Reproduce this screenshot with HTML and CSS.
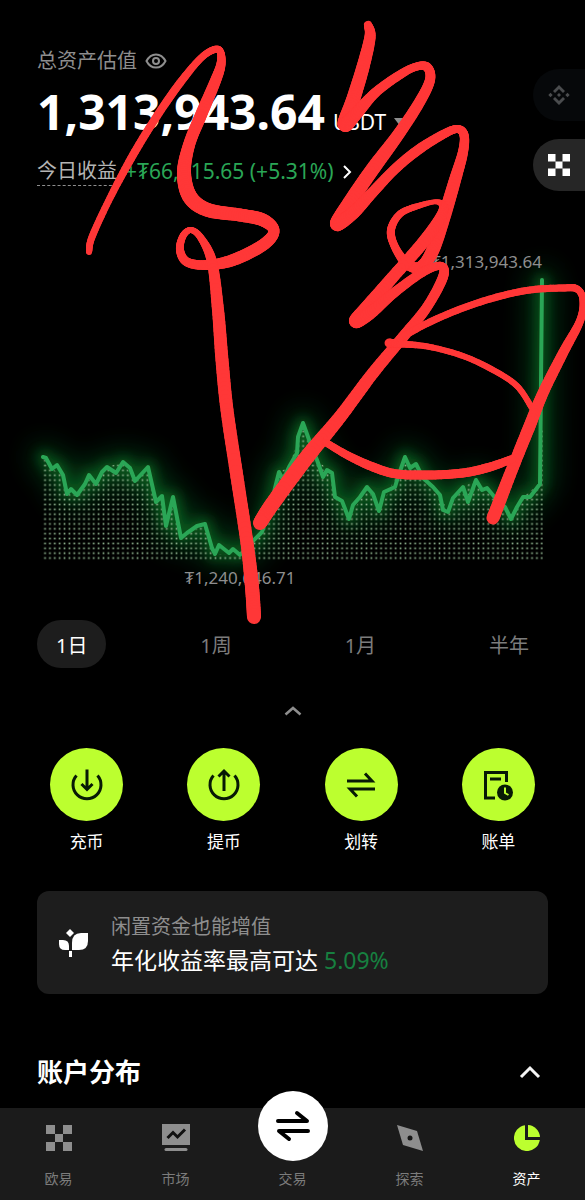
FILE: index.html
```html
<!DOCTYPE html>
<html lang="zh-CN">
<head>
<meta charset="utf-8">
<meta name="viewport" content="width=device-width, initial-scale=1">
<title>资产</title>
<link rel="stylesheet" href="styles.css">
</head>
<body>
<div class="page">
  <main class="content">
    <header class="summary">
      <div class="summary-label">
        <h1 class="label-text">总资产估值</h1>
        <button class="plain" aria-label="隐藏金额">
          <svg width="22" height="18" viewBox="0 0 22 18" fill="none" stroke="#8e8e8e" stroke-width="2"><path d="M1.500 9C6 .2 16 .2 20.500 9C16 17.800 6 17.800 1.500 9Z"/><circle cx="11" cy="9" r="3"/></svg>
        </button>
      </div>
      <div class="balance">
        <span class="amount">1,313,943.64</span>
        <button class="plain currency">USDT
          <svg width="12" height="8" viewBox="0 0 12 8"><path d="M0 0H12L6 8Z" fill="#8e8e8e"/></svg>
        </button>
      </div>
      <a class="profit" href="#profit">
        <span class="profit-label">今日收益</span>
        <span class="profit-value">+₮66,215.65 (+5.31%)</span>
        <svg width="10" height="14" viewBox="0 0 10 14" fill="none" stroke="#fff" stroke-width="2"><path d="M2 1L8 7L2 13"/></svg>
      </a>
    </header>

    <svg class="chart" viewBox="0 240 585 360" role="img" aria-label="资产走势">
      <defs>
        <pattern id="dots" x="42.600" y="555.600" width="4.870" height="4.870" patternUnits="userSpaceOnUse"><rect x="1.600" y="1.600" width="1.700" height="1.700" fill="#8fb48f"/></pattern>
        <filter id="glow" x="0" y="200" width="585" height="420" filterUnits="userSpaceOnUse"><feGaussianBlur stdDeviation="6"/></filter>
        <filter id="haze" x="0" y="200" width="585" height="420" filterUnits="userSpaceOnUse"><feGaussianBlur stdDeviation="14"/></filter>
        <path id="trend" d="M43 457L46 458L52 469L57 465L63 475L67 494L71 489L77 495L85 484L89 475L96 484L102 472L107 467L116 473L123 462L130 468L135 481L148 467L156 502L162 496L166 526L173 497L181 538L187 533L197 526L205 524L212 548L215 554L219 545L229 553L233 549L240 555L252 542L262 532L272 500L279 472L283 480L289 467L297 453L298 437L303 423L312 448L317 460L323 477L327 470L332 473L335 497L342 501L349 519L353 505L360 497L367 487L373 494L379 511L384 492L395 487L398 477L405 457L410 468L416 464L423 478L433 487L440 495L443 510L448 512L453 498L463 487L468 502L476 480L482 490L487 488L497 500L505 507L511 519L517 507L523 497L530 497L540 484L542 280"/>
        <clipPath id="under"><path d="M43 457L52 469L63 475L67 494L77 495L89 475L96 484L107 467L123 462L135 481L148 467L156 502L162 496L166 526L173 497L181 538L205 524L215 554L240 556L262 532L279 472L289 467L303 423L317 460L332 473L335 497L349 519L367 487L379 511L405 457L423 478L440 495L448 512L463 487L476 480L497 500L511 519L523 497L539 484L541 430L543 430V560H43Z"/></clipPath>
      </defs>
      <g fill="none" stroke-linejoin="round" stroke-linecap="round">
        <use href="#trend" stroke="#087a2e" stroke-width="24" opacity=".45" filter="url(#haze)"/>
        <use href="#trend" stroke="#07882c" stroke-width="11" opacity=".5" filter="url(#glow)"/>
        <rect x="42" y="420" width="502" height="140" fill="url(#dots)" clip-path="url(#under)"/>
        <use href="#trend" stroke="#2aa656" stroke-width="4"/>
      </g>
      <text class="chart-label" x="542" y="268" text-anchor="end">₮1,313,943.64</text>
      <text class="chart-label" x="240" y="584" text-anchor="middle">₮1,240,646.71</text>
    </svg>

    <div class="ranges">
      <button class="range range-active">1日</button>
      <button class="range">1周</button>
      <button class="range">1月</button>
      <button class="range">半年</button>
    </div>

    <button class="plain collapse" aria-label="收起图表">
      <svg width="18" height="10" viewBox="0 0 18 10" fill="none" stroke="#8e8e8e" stroke-width="2.500"><path d="M1.500 8.500L9 2L16.500 8.500"/></svg>
    </button>

    <div class="actions">
      <button class="plain action">
        <span class="disc"><svg width="36" height="36" viewBox="0 0 36 36" fill="none" stroke="#071a05" stroke-width="3"><path d="M7.500 8.500A14 14 0 1 0 28.500 8.500M18 2.500V22M12.500 17L18 22.500L23.500 17"/></svg></span>
        <span>充币</span>
      </button>
      <button class="plain action">
        <span class="disc"><svg width="36" height="36" viewBox="0 0 36 36" fill="none" stroke="#071a05" stroke-width="3"><path d="M7.500 8.500A14 14 0 1 0 28.500 8.500M18 24V5M12.500 9.500L18 4L23.500 9.500"/></svg></span>
        <span>提币</span>
      </button>
      <button class="plain action">
        <span class="disc"><svg width="36" height="36" viewBox="0 0 36 36" fill="none" stroke="#071a05" stroke-width="3"><path d="M4 14H29L22 6.500M32 22H7L14 29.500"/></svg></span>
        <span>划转</span>
      </button>
      <button class="plain action">
        <span class="disc"><svg width="36" height="36" viewBox="0 0 36 36" fill="none" stroke="#071a05" stroke-width="3"><path d="M15 31H5.500V5.500H26.500V15M10 12H21"/><circle cx="25" cy="25.500" r="8" fill="#071a05" stroke="none"/><path d="M25 20.500V26L28.500 28" stroke="#bcff2f" stroke-width="2"/></svg></span>
        <span>账单</span>
      </button>
    </div>

    <a class="earn" href="#earn">
      <svg class="earn-icon" width="30" height="30" viewBox="0 0 30 30" fill="#fff"><path d="M11 1L15 5L11 9L7 5Z"/><path d="M0 12H4Q10 12 10 18V22H6Q0 22 0 16Z"/><path d="M29 5V13Q29 22 20 22H13V15Q13 5 22 5Z"/><path d="M10 23H13V29H10Z"/></svg>
      <span class="earn-copy">
        <span class="earn-note">闲置资金也能增值</span>
        <span class="earn-rate">年化收益率最高可达 <span class="rate">5.09%</span></span>
      </span>
    </a>

    <section class="accounts">
      <h2 class="accounts-title">账户分布</h2>
      <button class="plain" aria-label="收起账户分布">
        <svg width="22" height="14" viewBox="0 0 22 14" fill="none" stroke="#f4f4f4" stroke-width="3"><path d="M2 12L11 3L20 12"/></svg>
      </button>
    </section>
  </main>

  <nav class="nav">
    <a class="nav-item" href="#home">
      <span class="nav-icon"><svg width="26" height="26" viewBox="0 0 26 26" fill="#8e8e8e"><path d="M0 0H9V9H0ZM17 0H26V9H17ZM9 9H17V17H9ZM0 17H9V26H0ZM17 17H26V26H17Z"/></svg></span>
      <span>欧易</span>
    </a>
    <a class="nav-item" href="#market">
      <span class="nav-icon"><svg width="28" height="28" viewBox="0 0 28 28"><path d="M0 0H28V21H0Z" fill="#8e8e8e"/><path d="M4 25.500H24" stroke="#8e8e8e" stroke-width="3" stroke-linecap="round"/><path d="M5.500 14L11 8.500L15.500 13L23 5.500" fill="none" stroke="#111" stroke-width="3"/></svg></span>
      <span>市场</span>
    </a>
    <a class="nav-item" href="#trade">
      <span class="nav-icon"><span class="trade"><svg width="38" height="34" viewBox="0 0 38 34" fill="none" stroke="#000" stroke-width="4" stroke-linecap="round" stroke-linejoin="round"><path d="M4 12H33L23 4M34 22H5L15 30"/></svg></span></span>
      <span>交易</span>
    </a>
    <a class="nav-item" href="#explore">
      <span class="nav-icon"><svg width="26" height="26" viewBox="0 0 26 26"><path d="M0 0L20 6L26 26L6 20Z" fill="#8e8e8e"/><circle cx="13" cy="13" r="2.500" fill="#161616"/></svg></span>
      <span>探索</span>
    </a>
    <a class="nav-item nav-active" href="#assets" aria-current="page">
      <span class="nav-icon"><svg width="26" height="26" viewBox="0 0 26 26" fill="#bcff2f"><path d="M11 .2A13 13 0 1 0 25.800 15H11Z"/><path d="M14 0A13 13 0 0 1 26 12H14Z"/></svg></span>
      <span>资产</span>
    </a>
  </nav>

  <div class="switcher">
    <button class="plain venue venue-dim" aria-label="Binance">
      <svg width="22" height="22" viewBox="0 0 22 22" fill="#4a4c4e"><path d="M11 1L17 7L15 9L11 5L7 9L5 7ZM11 21L17 15L15 13L11 17L7 13L5 15ZM11 9L13 11L11 13L9 11ZM2.500 8.800L4.700 11L2.500 13.200L.3 11ZM19.500 8.800L21.700 11L19.500 13.200L17.300 11Z"/></svg>
    </button>
    <button class="plain venue" aria-label="OKX">
      <svg width="22" height="22" viewBox="0 0 22 22" fill="#fff"><path d="M0 0H7.500V7.500H0ZM14.500 0H22V7.500H14.500ZM7.500 7.500H14.500V14.500H7.500ZM0 14.500H7.500V22H0ZM14.500 14.500H22V22H14.500Z"/></svg>
    </button>
  </div>

  <svg class="ink" id="ink" viewBox="0 0 585 640" aria-hidden="true"></svg>
</div>
<script src="ink.js"></script>
</body>
</html>
```
FILE: styles.css
```css
* { box-sizing: border-box; }

body {
  margin: 0;
  background: #000;
  color: #fff;
  font-family: "Noto Sans", "Noto Sans CJK SC", sans-serif;
}

a { color: inherit; text-decoration: none; }
svg { display: block; flex: none; }

button { font: inherit; cursor: pointer; }

.plain {
  padding: 0;
  border: 0;
  background: none;
  color: inherit;
}

.page {
  position: relative;
  display: flex;
  flex-direction: column;
  min-height: 100vh;
  overflow: hidden;
}

.content { padding-bottom: 18px; }

.summary {
  display: flex;
  flex-direction: column;
  align-items: flex-start;
  padding: 46px 37px 0;
  margin-bottom: 54px;
}

.summary-label {
  display: flex;
  align-items: center;
  gap: 8px;
  line-height: 30px;
}

.label-text {
  margin: 0;
  font-size: 20px;
  font-weight: 400;
  color: #8e8e8e;
}

.balance {
  display: flex;
  align-items: baseline;
  gap: 8px;
  margin: 6px 0 15px;
  line-height: 60px;
}

.amount { font-size: 48px; font-weight: 700; }

.currency {
  display: flex;
  align-items: center;
  gap: 8px;
  font-size: 21px;
  line-height: 30px;
}

.profit {
  display: flex;
  align-items: flex-start;
  gap: 8px;
  font-size: 20px;
  line-height: 28px;
}

.profit svg { align-self: center; }

.profit-label {
  color: #b4b4b4;
  border-bottom: 1px dashed #8e8e8e;
}

.profit-value { color: #2aa656; font-size: 21px; }

.chart { width: 100%; }

.chart-label {
  font-size: 17px;
  fill: #8e8e8e;
}

.ranges {
  display: flex;
  justify-content: space-between;
  padding: 0 37px;
  margin-top: 20px;
}

.range {
  padding: 4px 19px 0;
  border: 0;
  border-radius: 24px;
  background: none;
  color: #7c7c7c;
  font-size: 20px;
  line-height: 44px;
}

.range-active { background: #1d1d1d; color: #fff; }

.collapse {
  display: block;
  padding: 9px;
  margin: 29px auto 23px;
}

.actions {
  display: grid;
  grid-template-columns: repeat(4, 1fr);
  padding: 0 18px;
}

.action {
  display: flex;
  flex-direction: column;
  align-items: center;
  gap: 9px;
  font-size: 17px;
  line-height: 24px;
}

.disc {
  display: grid;
  place-items: center;
  width: 73px;
  height: 73px;
  border-radius: 50%;
  background: #bcff2f;
}

.earn {
  display: flex;
  align-items: center;
  gap: 22px;
  margin: 37px 37px 60px;
  padding: 16px 22px;
  border-radius: 12px;
  background: #1d1d1d;
}

.earn-copy {
  display: flex;
  flex-direction: column;
  padding-top: 5px;
}

.earn-note { color: #8e8e8e; font-size: 20px; line-height: 30px; }
.earn-rate { font-size: 23px; line-height: 36px; }
.rate { color: #178040; }

.accounts {
  display: flex;
  align-items: center;
  justify-content: space-between;
  padding: 0 44px 0 37px;
}

.accounts-title {
  margin: 0;
  font-size: 26px;
  font-weight: 600;
  line-height: 36px;
}

.nav {
  display: grid;
  grid-template-columns: repeat(5, 1fr);
  margin-top: auto;
  padding: 14px 0 11px;
  background: #1b1b1b;
}

.nav-item {
  display: flex;
  flex-direction: column;
  align-items: center;
  gap: 15px;
  color: #7c7c7c;
  font-size: 14px;
  line-height: 20px;
}

.nav-active { color: #fff; }

.nav-icon {
  position: relative;
  display: grid;
  place-items: center;
  width: 70px;
  height: 32px;
}

.trade {
  position: absolute;
  bottom: 0;
  left: 0;
  display: grid;
  place-items: center;
  width: 70px;
  height: 70px;
  margin-bottom: -7px;
  border-radius: 50%;
  background: #fff;
}

.switcher {
  position: absolute;
  top: 69px;
  right: 0;
  display: flex;
  flex-direction: column;
  gap: 18px;
}

.venue {
  display: grid;
  align-items: center;
  width: 52px;
  height: 52px;
  padding-left: 15px;
  border-radius: 26px 0 0 26px;
  background: #262626;
}

.venue-dim { background: #06080a; }

.ink {
  position: absolute;
  top: 0;
  left: 0;
  width: 100%;
  pointer-events: none;
}
```
FILE: ink.js
```js
// Freehand strokes as [x, y, pen width], smoothed and drawn in short segments.
const strokes = [
  [[89,252,5],[92,237,6],[110,198,6],[133,155,7],[157,116,7],[180,83,7],[200,59,6],[213,50,6],[220,51,6],[221,64,8],[215,82,10],[201,115,11],[189,145,11],[184,173,13],[190,197,14],[208,210,13],[240,215,12],[263,220,12],[274,231,10],[263,245,11],[233,260,11],[207,265,9],[187,262,8],[180,250,7],[183,236,6],[191,230,5],[201,238,6],[212,262,9],[218,310,11],[222,360,12],[227,410,12],[237,477,12],[247,543,12],[252,587,13],[254,617,13]],
  [[368,25,7],[370,37,10],[363,67,12],[353,100,13],[345,124,14],[355,115,12],[375,93,9],[398,76,8],[415,67,7],[427,67,8],[430,80,9],[419,103,10],[398,135,11],[372,170,13],[348,205,13],[337,224,13],[353,213,12],[372,193,10],[395,169,9],[418,150,9],[442,135,8],[457,129,7],[464,135,8],[463,152,9],[455,180,11],[444,217,12],[432,252,12],[420,267,10],[407,264,9],[395,247,7],[391,230,7],[400,214,6],[418,206,5],[438,202,4],[443,212,9],[425,240,11],[392,278,11],[367,307,12],[356,321,13],[370,313,12],[395,292,9],[423,272,8],[441,266,7],[443,277,9],[427,307,9],[403,337,10],[373,373,11],[340,417,12],[307,457,14],[273,503,14],[260,523,13]],
  [[389,343,8],[403,344,6],[430,347,5],[463,356,5],[493,370,5],[517,386,5],[532,408,5]],
  [[400,338,6],[430,322,6],[463,308,6],[497,297,6],[530,290,6],[563,288,6],[577,289,6],[583,300,6],[580,321,7],[563,353,9],[543,393,10],[530,425,11],[513,467,11],[493,518,12]],
  [[325,442,6],[347,455,7],[373,467,8],[397,474,8],[430,475,8],[463,473,8],[490,467,8],[512,459,7]]
];

const layer = document.getElementById("ink");
const spline = (a, b, c, d, t) =>
  0.5 * (2 * b + (c - a) * t + (2 * a - 5 * b + 4 * c - d) * t * t + (3 * b - a - 3 * c + d) * t * t * t);

for (const pts of strokes) {
  let last = pts[0];
  for (let i = 0; i < pts.length - 1; i++) {
    const quad = [pts[Math.max(i - 1, 0)], pts[i], pts[i + 1], pts[Math.min(i + 2, pts.length - 1)]];
    for (let s = 1; s <= 12; s++) {
      const next = [0, 1, 2].map(k => spline(quad[0][k], quad[1][k], quad[2][k], quad[3][k], s / 12));
      const line = document.createElementNS("http://www.w3.org/2000/svg", "path");
      line.setAttribute("d", `M${last[0]} ${last[1]}L${next[0]} ${next[1]}`);
      line.setAttribute("stroke", "#ff3737");
      line.setAttribute("stroke-width", next[2] + 1);
      line.setAttribute("stroke-linecap", "round");
      layer.appendChild(line);
      last = next;
    }
  }
}
```
